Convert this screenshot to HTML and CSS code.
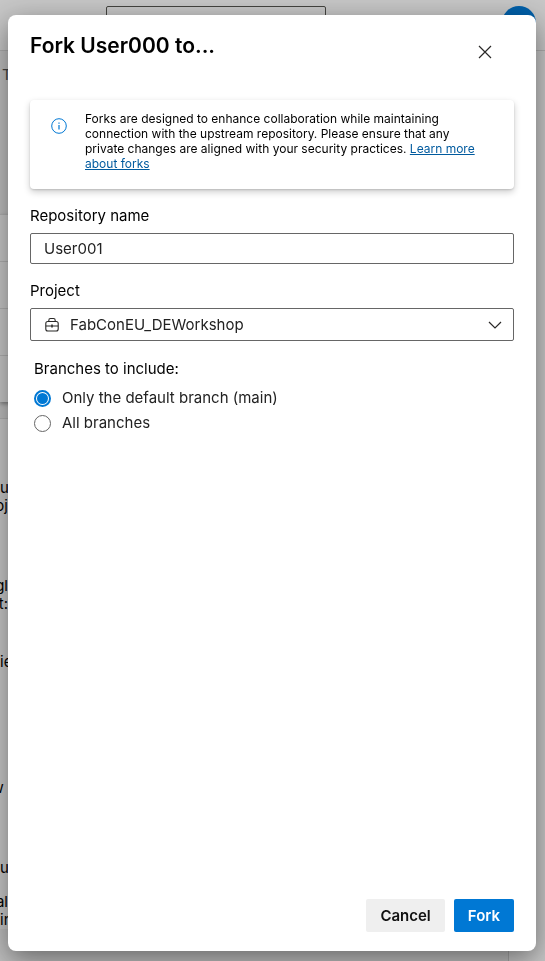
FILE: index.html
```html
<!DOCTYPE html>
<html lang="en">
<head>
<meta charset="utf-8">
<meta name="viewport" content="width=device-width, initial-scale=1">
<title>Fork repository</title>
<link rel="stylesheet" href="styles.css">
</head>
<body>
<div class="page" aria-hidden="true">
  <div class="topbar">
    <div class="search"></div>
    <div class="avatar"></div>
  </div>
  <div class="content">
    <div class="heading">T</div>
    <div class="table">
      <div class="row"></div>
      <div class="row"></div>
      <div class="row"></div>
      <div class="row"></div>
    </div>
    <div class="readme">
      <p><span>u</span><span class="cut">oj</span></p>
      <p><span class="cut">gl</span><span class="cut">t:</span></p>
      <p><span>ie</span></p>
      <p><span class="cut">w&nbsp;</span></p>
      <p><span>u</span></p>
      <p><span class="cut">al</span><span>in</span></p>
    </div>
  </div>
</div>
<div class="overlay">
  <form class="dialog" role="dialog" aria-labelledby="title">
    <header class="header">
      <h1 id="title">Fork User000 to...</h1>
      <button class="close" type="button" aria-label="Close">
        <svg width="14" height="14" viewBox="0 0 14 14" fill="none" stroke="#292827" stroke-width="1.2"><path d="M1 1l12 12M13 1L1 13"/></svg>
      </button>
    </header>
    <div class="message">
      <svg class="info" width="16" height="16" viewBox="0 0 16 16" fill="none" stroke="#0078d4"><circle cx="8" cy="8" r="7.3"/><path d="M8 7v4.5M8 4.5v1.2" stroke-width="1.2"/></svg>
      <p>Forks are designed to enhance collaboration while maintaining connection with the upstream repository. Please ensure that any private changes are aligned with your security practices. <a href="#">Learn more about forks</a></p>
    </div>
    <div class="field">
      <label for="name">Repository name</label>
      <input class="control" id="name" type="text" value="User001">
    </div>
    <div class="field">
      <label for="project">Project</label>
      <div class="picker">
        <select class="control" id="project"><option>FabConEU_DEWorkshop</option></select>
        <svg class="case" width="16" height="16" viewBox="0 0 16 16" fill="none" stroke="#292827" stroke-width="1.1"><rect x="1.8" y="4.5" width="12.4" height="9.5" rx="2"/><path d="M4.8 4.5V3.4Q4.8 1.5 6.5 1.5h3q1.700 0 1.700 1.900v1.100M1.800 9h12.400"/><path d="M8 7.500v3" stroke-width="1.500"/></svg>
        <svg class="chevron" width="14" height="8" viewBox="0 0 14 8" fill="none" stroke="#292827" stroke-width="1.2"><path d="M1 1l6 6 6-6"/></svg>
      </div>
    </div>
    <fieldset class="branches">
      <legend>Branches to include:</legend>
      <label><input type="radio" name="branches" checked>Only the default branch (main)</label>
      <label><input type="radio" name="branches">All branches</label>
    </fieldset>
    <footer class="footer">
      <button class="button" type="button">Cancel</button>
      <button class="button primary" type="submit">Fork</button>
    </footer>
  </form>
</div>
</body>
</html>
```
FILE: styles.css
```css
* { box-sizing: border-box; }
body {
  margin: 0;
  height: 100vh;
  overflow: hidden;
  font: 15px/20px Inter, "Liberation Sans", sans-serif;
  color: #000;
}
h1, p { margin: 0; }
button, input, select { font: inherit; }

.page {
  display: flex;
  flex-direction: column;
  height: 100vh;
  background: #f8f8f8;
}
.topbar {
  display: flex;
  justify-content: space-between;
  height: 51px;
  padding: 6px 9px 0 106px;
  border-bottom: 1px solid #d8d8d8;
}
.search {
  width: 220px;
  height: 32px;
  border: 1px solid #555550;
  border-radius: 2px;
}
.avatar {
  width: 34px;
  height: 34px;
  border-radius: 50%;
  background: #0078d4;
}
.content {
  flex: 1;
  margin-right: 36px;
  border-right: 1px solid #d0d0d0;
  background: #eee;
}
.heading {
  height: 163px;
  padding: 14px 0 0 2px;
  color: #555;
}
.table {
  margin-bottom: 16px;
  background: #fafafa;
  box-shadow: 0 2px 4px #0005;
}
.row {
  height: 47px;
  border-top: 1px solid #ddd;
}
.readme {
  display: grid;
  grid-template-rows: 98px 76px 126px 80px 34px auto;
  padding-top: 60px;
  border-top: 1px solid #ddd;
  background: #fafafa;
  line-height: 18px;
}
.readme p {
  display: flex;
  flex-direction: column;
  width: 8px;
  overflow: hidden;
}
.readme .cut { align-self: flex-end; }

.overlay {
  position: fixed;
  inset: 0;
  display: flex;
  padding: 15px 9px 10px 8px;
  background: #0003;
}
.dialog {
  flex: 1;
  display: flex;
  flex-direction: column;
  padding: 18px 22px 19px;
  border-radius: 8px;
  background: #fff;
  box-shadow: 0 8px 28px #0007;
}
.header {
  display: flex;
  justify-content: space-between;
  height: 67px;
}
h1 {
  font-size: 21px;
  line-height: 26px;
  font-weight: 600;
}
.close {
  display: grid;
  place-items: center;
  width: 32px;
  height: 32px;
  margin: 3px 13px 0 0;
  padding: 0;
  border: 0;
  background: none;
}
.message {
  display: flex;
  gap: 18px;
  padding: 11px 32px 18px 21px;
  border-radius: 4px;
  font-size: 12px;
  line-height: 15px;
  box-shadow: 0 3px 7px #0003, 0 1px 2px #0002;
}
.info { flex: none; margin-top: 7px; }
a { color: #005a9e; }
.field {
  display: grid;
  gap: 7px;
  margin-top: 17px;
}
.control {
  width: 100%;
  height: 31px;
  padding: 0 13px;
  border: 1px solid #666;
  border-radius: 2px;
  background: #fff;
  color: #222;
}
.picker { display: grid; align-items: center; }
.picker > * { grid-area: 1 / 1; }
select.control { height: 33px; padding-left: 39px; appearance: none; }
.case { margin-left: 14px; pointer-events: none; }
.chevron { justify-self: end; margin-right: 12px; pointer-events: none; }
.branches {
  display: grid;
  gap: 5px;
  margin: 18px 0 0;
  padding: 0 4px;
  border: 0;
}
legend { padding: 0; margin-bottom: 9px; }
.branches label {
  display: flex;
  align-items: center;
  gap: 11px;
  color: #222;
}
.branches input {
  appearance: none;
  width: 17px;
  height: 17px;
  margin: 0;
  border: 1px solid #666;
  border-radius: 50%;
}
.branches input:checked {
  padding: 1px;
  border: 2px solid #0078d4;
  background: #0078d4 content-box;
}
.footer {
  display: flex;
  justify-content: flex-end;
  gap: 9px;
  margin-top: auto;
}
.button {
  height: 33px;
  padding: 0 14px;
  border: 0;
  border-radius: 2px;
  background: #efefef;
  color: #111;
  font-weight: 600;
}
.primary { background: #0078d4; color: #fff; }
```
